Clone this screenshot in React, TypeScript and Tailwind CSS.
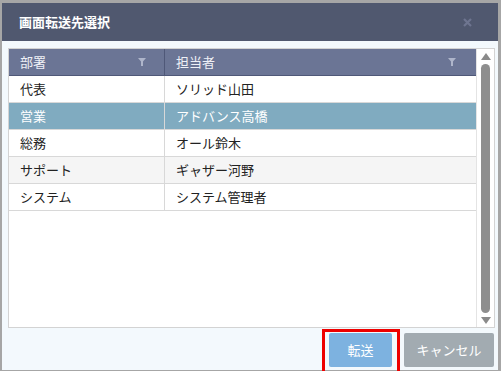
import React from "react";

const rows = [
  { dept: "代表", person: "ソリッド山田" },
  { dept: "営業", person: "アドバンス高橋", selected: true },
  { dept: "総務", person: "オール鈴木" },
  { dept: "サポート", person: "ギャザー河野", alt: true },
  { dept: "システム", person: "システム管理者" },
];

function Funnel() {
  return (
    <svg width="8" height="8" viewBox="0 0 8 8" className="shrink-0">
      <path d="M0 0 H8 L5 3.5 V8 H3 V3.5 Z" fill="#aeb5ca" />
    </svg>
  );
}

export default function App() {
  return (
    <div
      className="w-[501px] h-[371px] bg-[#a6a6a6] pt-[3px] pl-[2px] pr-[3px] pb-[1px] text-[13px] text-[#222]"
      style={{ fontFamily: '"Noto Sans CJK JP", "Noto Sans", sans-serif' }}
    >
      <div className="flex flex-col h-full">
        <div className="h-[38px] bg-[#50586f] flex items-center pl-[17px] pr-[26px] shrink-0">
          <span className="text-white font-bold text-[13px]">画面転送先選択</span>
          <div className="flex-1" />
          <svg width="9" height="9" viewBox="0 0 9 9">
            <path d="M1 1 L8 8 M8 1 L1 8" stroke="#6e7590" strokeWidth="2.2" />
          </svg>
        </div>

        <div className="flex-1 bg-[#f3f9fd] pl-[6px] pr-[3px] pt-[7px] flex flex-col">
          <div className="h-[280px] border border-[#d3d3d3] bg-white flex shrink-0">
            <div className="flex-1 flex flex-col">
              <div className="h-[27px] bg-[#6b7595] border-b border-[#4f5878] flex text-[#eef0f6]">
                <div className="w-[156px] border-r border-[#4f5878] flex items-center pl-[11px] pr-[18px]">
                  <span className="flex-1">部署</span>
                  <Funnel />
                </div>
                <div className="flex-1 flex items-center pl-[11px] pr-[20px]">
                  <span className="flex-1">担当者</span>
                  <Funnel />
                </div>
              </div>
              {rows.map((r) => (
                <div
                  key={r.dept}
                  className={
                    "h-[27px] flex border-b " +
                    (r.selected
                      ? "bg-[#80abc0] text-white border-[#d8d8d8]"
                      : r.alt
                      ? "bg-[#f5f5f5] border-[#d8d8d8]"
                      : "bg-white border-[#d8d8d8]")
                  }
                >
                  <div className="w-[156px] border-r border-[#d8d8d8] flex items-center pl-[11px]">
                    {r.dept}
                  </div>
                  <div className="flex-1 flex items-center pl-[11px]">{r.person}</div>
                </div>
              ))}
            </div>
            <div className="w-[18px] border-l border-[#e4e4e4] bg-white flex flex-col items-center pt-[4px] pb-[3px]">
              <svg width="10" height="7" viewBox="0 0 10 7">
                <path d="M5 0 L10 7 H0 Z" fill="#8a8a8a" />
              </svg>
              <div className="w-[9px] flex-1 my-[4px] rounded-full bg-[#8e8e8e]" />
              <svg width="10" height="7" viewBox="0 0 10 7">
                <path d="M0 0 H10 L5 7 Z" fill="#8a8a8a" />
              </svg>
            </div>
          </div>

          <div className="flex justify-end gap-[12px] pt-[5px] pr-[1px]">
            <div className="relative">
              <button className="w-[63px] h-[34px] bg-[#7db2e0] text-white text-[13px] rounded-[2px]">
                転送
              </button>
              <span className="absolute left-[-7px] right-[-8px] top-[-4px] bottom-[-7px] border-[3px] border-[#ee0000] pointer-events-none" />
            </div>
            <button className="w-[90px] h-[34px] bg-[#a2abb1] text-white text-[13px] rounded-[2px]">
              キャンセル
            </button>
          </div>
        </div>
      </div>
    </div>
  );
}
